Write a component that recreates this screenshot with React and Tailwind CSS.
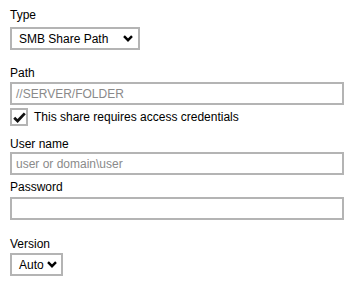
import React from "react";

function Chevron() {
  return (
    <svg width="10" height="7" viewBox="0 0 10 7" className="shrink-0">
      <path d="M1 1.2 L5 5.2 L9 1.2" fill="none" stroke="#000" strokeWidth="2.4" />
    </svg>
  );
}

function Label({ children, className = "" }) {
  return <div className={"text-[12px] leading-[14px] text-black " + className}>{children}</div>;
}

function Input({ placeholder }) {
  return (
    <div className="h-[23px] w-[334px] border-2 border-[#b4b4b4] bg-white flex items-center px-[4px] text-[12px] text-[#8a8a8a]">
      {placeholder}
    </div>
  );
}

export default function App() {
  return (
    <div className="w-[355px] h-[290px] bg-white pl-[10px] pt-[8px] flex flex-col" style={{ fontFamily: '"Liberation Sans", Arial, sans-serif' }}>
      <Label>Type</Label>
      <div className="mt-[5px] h-[23px] w-[130px] border-2 border-[#b4b4b4] flex items-center justify-between pl-[7px] pr-[5px] text-[12px] text-black">
        <span>SMB Share Path</span>
        <Chevron />
      </div>
      <Label className="mt-[16px]">Path</Label>
      <div className="mt-[2px]">
        <Input placeholder="//SERVER/FOLDER" />
      </div>
      <div className="mt-[3px] flex items-center gap-[6px]">
        <div className="w-[18px] h-[18px] border-2 border-[#b4b4b4] bg-white flex items-center justify-center">
          <svg width="13" height="11" viewBox="0 0 13 11">
            <path d="M1.2 5.8 L4.6 9 L11.8 1.4" fill="none" stroke="#111" strokeWidth="2.8" />
          </svg>
        </div>
        <span className="text-[12px] text-black">This share requires access credentials</span>
      </div>
      <Label className="mt-[11px]">User name</Label>
      <div className="mt-[1px]">
        <Input placeholder="user or domain\user" />
      </div>
      <Label className="mt-[5px]">Password</Label>
      <div className="mt-[3px]">
        <Input placeholder="" />
      </div>
      <Label className="mt-[17px]">Version</Label>
      <div className="mt-[2px] h-[23px] w-[53px] border-2 border-[#b4b4b4] flex items-center justify-between pl-[7px] pr-[4px] text-[12px] text-black">
        <span>Auto</span>
        <Chevron />
      </div>
    </div>
  );
}
